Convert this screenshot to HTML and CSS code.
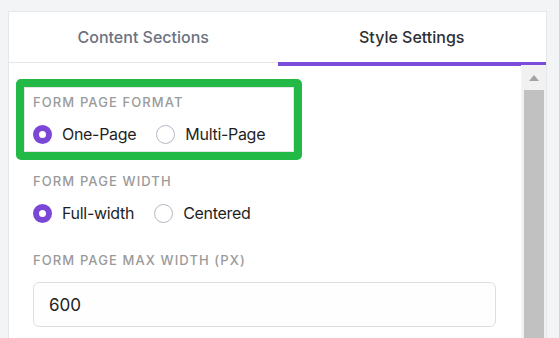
FILE: index.html
```html
<!DOCTYPE html>
<html lang="en">

<head>
    <meta charset="UTF-8">
    <title>Form Settings</title>
    <link rel="stylesheet" href="styles.css">
</head>

<body>
    <div class="panel">
        <div class="tabs">
            <div class="tab">Content Sections</div>
            <div class="tab active">Style Settings</div>
        </div>

        <div class="panel-body">
            <div class="content">
                <div class="field highlight">
                    <div class="field-label">Form Page Format</div>
                    <div class="options">
                        <label class="option"><span class="radio checked"></span>One-Page</label>
                        <label class="option"><span class="radio"></span>Multi-Page</label>
                    </div>
                </div>

                <div class="field">
                    <div class="field-label">Form Page Width</div>
                    <div class="options">
                        <label class="option"><span class="radio checked"></span>Full-width</label>
                        <label class="option"><span class="radio"></span>Centered</label>
                    </div>
                </div>

                <div class="field">
                    <div class="field-label">Form Page Max Width (px)</div>
                    <div class="text-input">600</div>
                </div>
            </div>

            <div class="scrollbar">
                <div class="scroll-arrow"></div>
                <div class="scroll-thumb"></div>
            </div>
        </div>
    </div>
</body>

</html>
```

FILE: styles.css
```css
* {
    font-family: Inter, Roboto, "Liberation Sans", sans-serif;
    box-sizing: border-box;
    margin: 0;
}

html,
body {
    height: 100%;
    overflow: hidden;
}

body {
    background: #f3f4f6;
    padding: 11px 12px 0 8px;
}

.panel {
    background: #fff;
    border: 1px solid #e5e7eb;
    border-bottom: none;
    height: 340px;
    display: flex;
    flex-direction: column;
}

.tabs {
    display: flex;
    align-items: flex-start;
}

.tab {
    flex: 1;
    height: 51px;
    display: flex;
    align-items: center;
    justify-content: center;
    font-size: 16px;
    font-weight: 500;
    color: #6b7280;
    border-bottom: 1px solid #e5e7eb;
}

.tab.active {
    height: 54px;
    color: #2d2f33;
    border-bottom: 4px solid #7a4cd8;
}

.panel-body {
    flex: 1;
    display: flex;
}

.content {
    flex: 1;
    display: flex;
    flex-direction: column;
    padding: 21px 16px 0 15px;
}

.field {
    padding: 7px 9px 8px;
    margin-bottom: 14px;
}

.field.highlight {
    align-self: flex-start;
    width: 286px;
    margin: -8px -8px 6px;
    border: 8px solid #22b946;
    border-radius: 5px;
    box-shadow: inset 0 0 0 1px rgba(0, 0, 0, 0.1);
}

.field-label {
    font-size: 13px;
    line-height: 16px;
    font-weight: 500;
    letter-spacing: 1.1px;
    text-transform: uppercase;
    color: #9a9a9a;
    margin-bottom: 14px;
}

.options {
    display: flex;
    gap: 20px;
}

.option {
    display: flex;
    align-items: center;
    gap: 10px;
    height: 20px;
    font-size: 16px;
    letter-spacing: -0.3px;
    color: #1f1f1f;
}

.radio {
    width: 19px;
    height: 19px;
    border-radius: 50%;
    border: 1.5px solid #b3b9c3;
    background: #fff;
}

.radio.checked {
    border: 6px solid #7a47d6;
}

.text-input {
    height: 45px;
    border: 1px solid #dedde3;
    border-radius: 6px;
    padding-left: 15px;
    display: flex;
    align-items: center;
    font-size: 17px;
    color: #222;
    background: #fefefe;
}

.scrollbar {
    width: 25px;
    background: #f1f1f1;
    border-left: 1px solid #f6f6f6;
    padding: 0 2px;
    margin-top: -1px;
    display: flex;
    flex-direction: column;
    align-items: center;
}

.scroll-arrow {
    margin: 10px 0 9px;
    width: 0;
    height: 0;
    border-left: 5.5px solid transparent;
    border-right: 5.5px solid transparent;
    border-bottom: 6px solid #a3a3a3;
}

.scroll-thumb {
    align-self: stretch;
    flex: 1;
    background: #c1c1c1;
}
```
